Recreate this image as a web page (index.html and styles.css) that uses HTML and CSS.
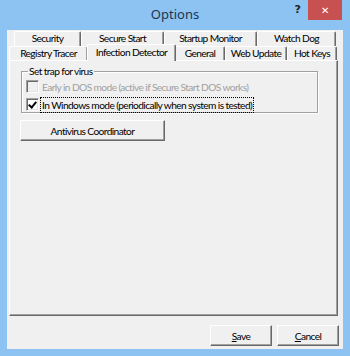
FILE: index.html
```html
<!DOCTYPE html>
<html lang="en">
<head>
    <meta charset="UTF-8">
    <title>Options</title>
    <link rel="stylesheet" href="styles.css">
</head>
<body>

<div class="window">
    <div class="titlebar">
        <span class="title">Options</span>
        <span class="help">?</span>
        <span class="close">&#x2715;</span>
    </div>

    <div class="client">
        <!-- tab rows, back row first -->
        <div class="tabs">
            <div class="tab-row back">
                <div class="tab w-security">Security</div>
                <div class="tab w-secure">Secure Start</div>
                <div class="tab w-startup">Startup Monitor</div>
                <div class="tab w-watch">Watch Dog</div>
            </div>
            <div class="tab-row front">
                <div class="tab w-registry">Registry Tracer</div>
                <div class="tab w-infection active">Infection Detector</div>
                <div class="tab w-general">General</div>
                <div class="tab w-web">Web Update</div>
                <div class="tab w-hot">Hot Keys</div>
            </div>
        </div>

        <div class="panel">
            <fieldset class="group">
                <legend>Set trap for virus</legend>
                <label class="check disabled">
                    <span class="box"></span>
                    <span>Early in DOS mode (active if Secure Start DOS works)</span>
                </label>
                <label class="check">
                    <span class="box checked"></span>
                    <span class="focus">In Windows mode (periodically when system is tested)</span>
                </label>
            </fieldset>
            <button class="btn wide">Antivirus Coordinator</button>
        </div>

        <div class="footer">
            <button class="btn small"><u>S</u>ave</button>
            <button class="btn small"><u>C</u>ancel</button>
        </div>
    </div>
</div>

</body>
</html>
```

FILE: styles.css
```css
* { margin: 0; padding: 0; box-sizing: border-box; }
body { background: #8cc3f3; font-family: Lato, "Liberation Sans", sans-serif; font-size: 10.2px; letter-spacing: -0.6px; color: #000; }

.window {
    width: 350px;
    height: 356px;
    background: #8cc3f3;
    padding: 0 7px 7px 7px;
    display: flex;
    flex-direction: column;
}

.titlebar {
    height: 30px;
    position: relative;
    display: flex;
    justify-content: center;
}
.title { font-family: "Noto Sans", sans-serif; font-size: 13px; letter-spacing: 0; color: #1f3550; margin-top: 5px; }
.help { position: absolute; right: 42px; top: 3px; font-family: "DejaVu Sans", sans-serif; font-weight: bold; font-size: 11px; letter-spacing: 0; color: #222; }
.close {
    position: absolute;
    right: 1px;
    top: 0;
    width: 34px;
    height: 20px;
    background: #c75050;
    color: #fff;
    font-family: "DejaVu Sans", sans-serif;
    font-size: 10px;
    font-weight: bold;
    display: flex;
    align-items: center;
    justify-content: center;
}

.client {
    flex: 1;
    background: #f0f0f0;
    display: flex;
    flex-direction: column;
    padding: 1px 0 0 2px;
}

/* tabs */
.tabs { height: 29px; position: relative; z-index: 2; }
.tab-row { display: flex; height: 15px; }
.tab-row.back { margin-left: 5px; }
.tab-row.front { height: 14px; }
.tab {
    border-top: 1px solid #fff;
    border-left: 1px solid #fff;
    border-right: 1px solid #696969;
    box-shadow: inset -1px 0 #a0a0a0;
    border-radius: 2px 2px 0 0;
    text-align: center;
    line-height: 13px;
    background: #f0f0f0;
    white-space: nowrap;
}
.tab.active {
    height: 17px;
    margin-top: -2px;
    margin-left: -1px;
    margin-right: -1px;
    line-height: 15px;
    position: relative;
}

.w-security { width: 67px; }
.w-secure { width: 83px; }
.w-startup { width: 93px; }
.w-watch { width: 79px; }
.w-registry { width: 79px; }
.w-infection { width: 89px; }
.w-general { width: 50px; }
.w-web { width: 62px; }
.w-hot { width: 50px; }

/* panel */
.panel {
    width: 329px;
    height: 256px;
    border-top: 1px solid #fff;
    border-left: 1px solid #fff;
    border-right: 1px solid #696969;
    border-bottom: 1px solid #696969;
    box-shadow: inset -1px -1px #a0a0a0;
    padding: 5px 0 0 10px;
}

.group {
    width: 297px;
    height: 47px;
    margin-left: 1px;
    border: 1px solid #a0a0a0;
    box-shadow: inset 1px 1px #fff, 1px 1px #fff;
    padding: 0 0 0 4px;
}
.group legend { margin-left: 2px; padding: 0 1px; line-height: 11px; }

.check { display: flex; align-items: center; gap: 3px; height: 13px; margin-top: 3px; }
.check + .check { margin-top: 5px; }
.check.disabled { color: #a0a0a0; }
.box {
    width: 13px;
    height: 13px;
    background: #fff;
    border-top: 1px solid #a0a0a0;
    border-left: 1px solid #a0a0a0;
    border-right: 1px solid #fff;
    border-bottom: 1px solid #fff;
    box-shadow: inset 1px 1px #696969, inset -1px -1px #e3e3e3;
    position: relative;
}
.check.disabled .box { background: #f0f0f0; }
.box.checked::after {
    content: "";
    position: absolute;
    left: 3px;
    top: 1px;
    width: 3px;
    height: 6px;
    border-right: 2px solid #000;
    border-bottom: 2px solid #000;
    transform: rotate(40deg);
}
.focus { outline: 1px dotted #000; outline-offset: 1px; }

.btn {
    font-family: inherit;
    font-size: inherit;
    letter-spacing: inherit;
    background: #f0f0f0;
    border-top: 1px solid #fff;
    border-left: 1px solid #fff;
    border-right: 1px solid #696969;
    border-bottom: 1px solid #696969;
    box-shadow: inset -1px -1px #a0a0a0;
    height: 21px;
}
.btn.wide { width: 145px; margin-top: 7px; }
.btn.small { width: 62px; }

.footer { display: flex; justify-content: flex-end; gap: 5px; padding: 9px 4px 0 0; }
```
